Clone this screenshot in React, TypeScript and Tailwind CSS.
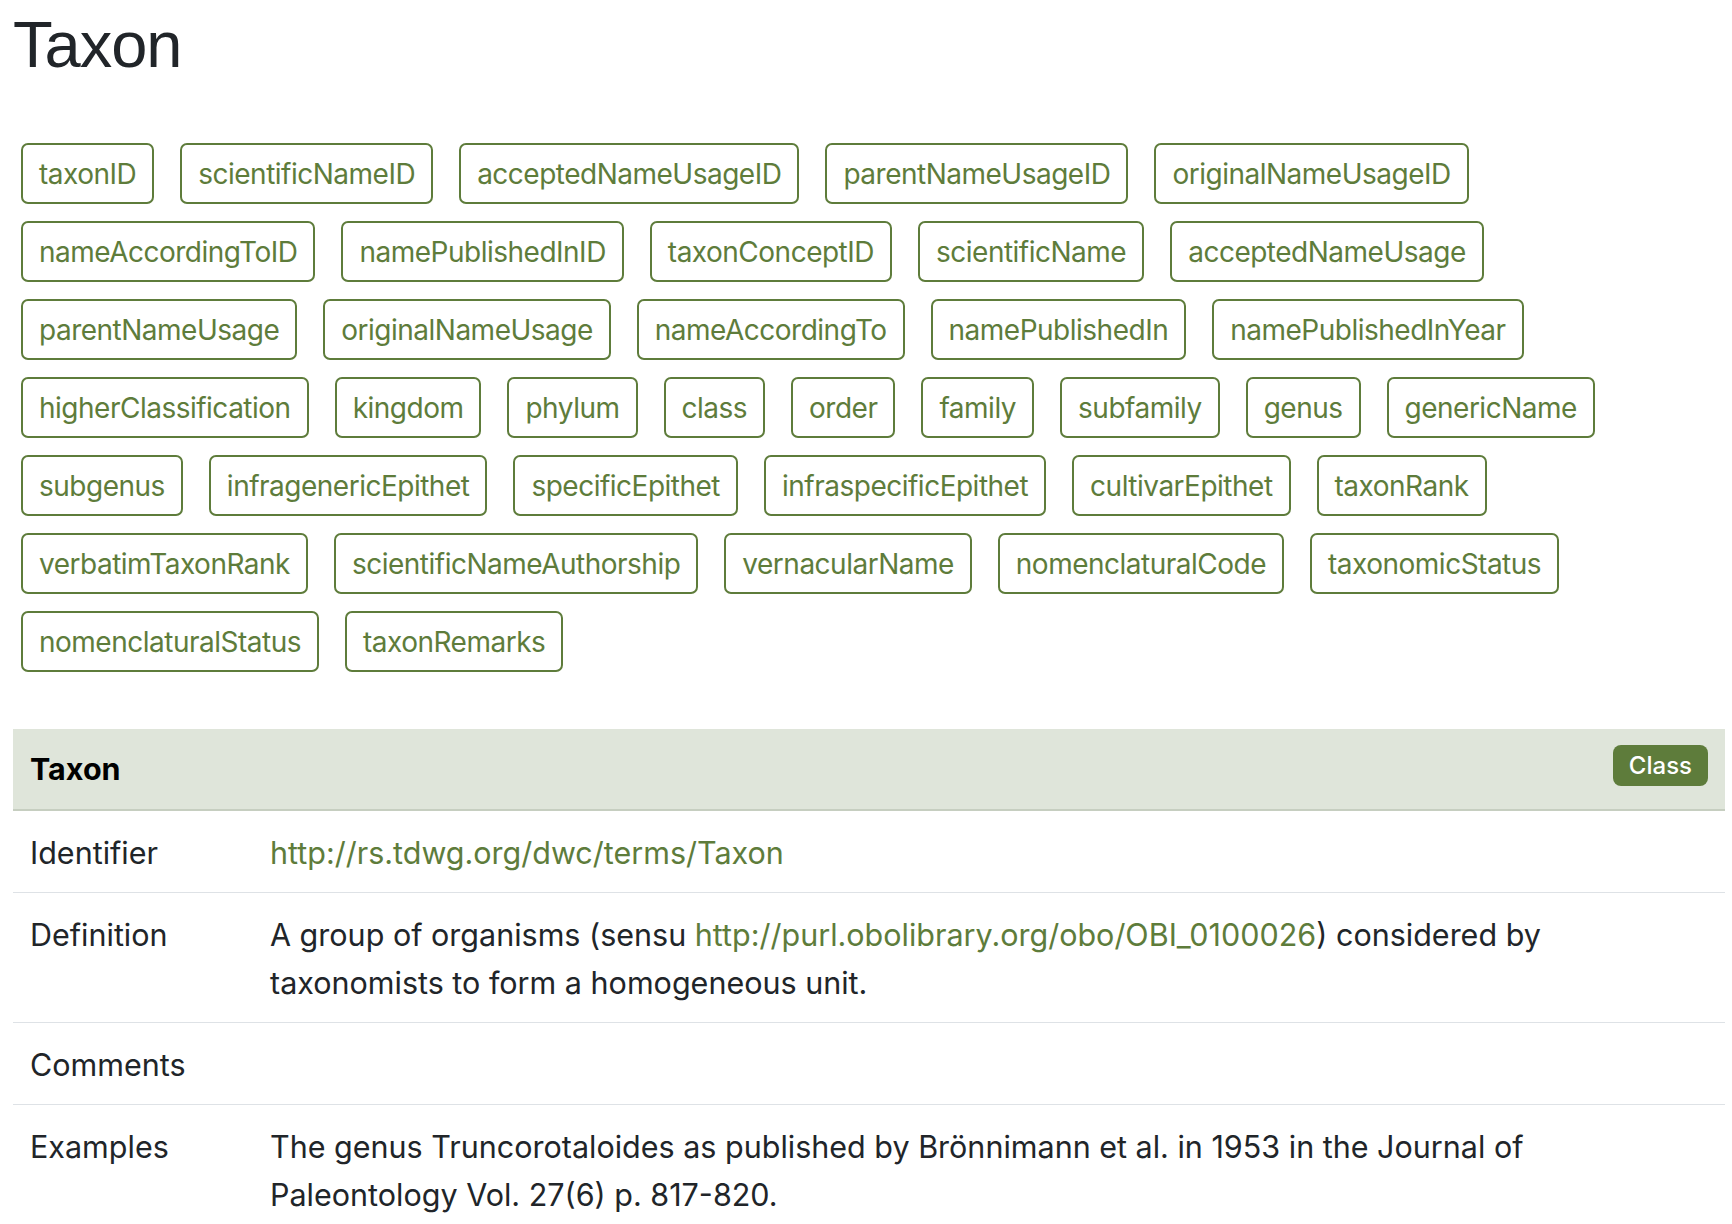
// Darwin Core term page — Taxon
const termRows: string[][] = [
  ["taxonID", "scientificNameID", "acceptedNameUsageID", "parentNameUsageID", "originalNameUsageID"],
  ["nameAccordingToID", "namePublishedInID", "taxonConceptID", "scientificName", "acceptedNameUsage"],
  ["parentNameUsage", "originalNameUsage", "nameAccordingTo", "namePublishedIn", "namePublishedInYear"],
  ["higherClassification", "kingdom", "phylum", "class", "order", "family", "subfamily", "genus", "genericName"],
  ["subgenus", "infragenericEpithet", "specificEpithet", "infraspecificEpithet", "cultivarEpithet", "taxonRank"],
  ["verbatimTaxonRank", "scientificNameAuthorship", "vernacularName", "nomenclaturalCode", "taxonomicStatus"],
  ["nomenclaturalStatus", "taxonRemarks"],
]

const TermBadge = ({ name }: { name: string }) => (
  <a
    href={`#dwc_${name}`}
    className="flex h-[61px] items-center rounded-[7px] border-2 border-[#5e7c3b] px-[16px] text-[28px] tracking-[-0.5px] text-[#5e7c3b]"
  >
    {name}
  </a>
)

const Row = ({ label, children }: { label: string; children?: React.ReactNode }) => (
  <div className="flex border-b border-[#dee2e6]">
    <div className="w-[240px] shrink-0 px-[17px] pt-[18px] pb-[15px]">{label}</div>
    <div className="flex-1 px-[17px] pt-[18px] pb-[15px]">{children}</div>
  </div>
)

export default function App() {
  return (
    <div className="min-h-screen bg-white pl-[13px] text-[#212529] font-['Inter','Noto_Sans',sans-serif]">
      <h1 className="pt-[12px] text-[65px] leading-[65px] font-normal tracking-[-1px] font-['Liberation_Sans','Arial',sans-serif]">
        Taxon
      </h1>

      {/* Terms of the class */}
      <div className="mt-[66px] flex flex-col gap-[17px] pl-[8px]">
        {termRows.map((row, i) => (
          <div key={i} className="flex gap-[26px]">
            {row.map(t => (
              <TermBadge key={t} name={t} />
            ))}
          </div>
        ))}
      </div>

      {/* Class table */}
      <div className="mt-[57px] w-[1712px] text-[30.5px] leading-[48px]">
        <div className="flex h-[82px] items-center justify-between border-b-2 border-[#c6cec0] bg-[#dfe5da] px-[17px]">
          <span className="font-bold text-black">Taxon</span>
          <span className="mb-[7px] flex h-[41px] items-center rounded-[8px] bg-[#5e7c3b] px-[16px] text-[24px] leading-none font-medium text-white">
            Class
          </span>
        </div>
        <Row label="Identifier">
          <a href="http://rs.tdwg.org/dwc/terms/Taxon" className="text-[#5e7c3b]">
            http://rs.tdwg.org/dwc/terms/Taxon
          </a>
        </Row>
        <Row label="Definition">
          A group of organisms (sensu{" "}
          <a href="http://purl.obolibrary.org/obo/OBI_0100026" className="text-[#5e7c3b]">
            http://purl.obolibrary.org/obo/OBI_0100026
          </a>
          ) considered by
          <br />
          taxonomists to form a homogeneous unit.
        </Row>
        <Row label="Comments" />
        <Row label="Examples">
          The genus Truncorotaloides as published by Brönnimann et al. in 1953 in the Journal of
          <br />
          Paleontology Vol. 27(6) p. 817-820.
        </Row>
      </div>
    </div>
  )
}
